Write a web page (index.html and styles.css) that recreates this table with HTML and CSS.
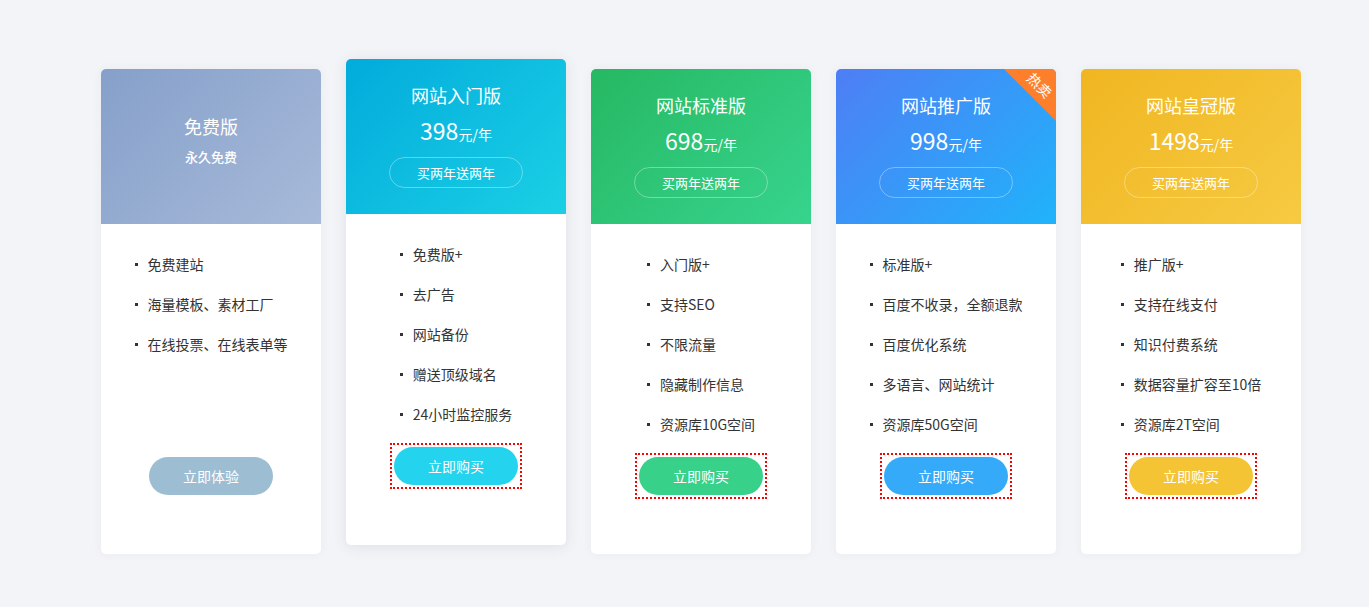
FILE: index.html
```html
<!DOCTYPE html>
<html lang="zh-CN">
<head>
<meta charset="utf-8">
<title>价格</title>
<link rel="stylesheet" href="styles.css">
</head>
<body>
<div class="plans">
  <div class="card card-free">
    <div class="head">
      <div class="title">免费版</div>
      <div class="sub">永久免费</div>
    </div>
    <div class="body">
      <div class="list-wrap">
        <ul class="feats">
          <li>免费建站</li>
          <li>海量模板、素材工厂</li>
          <li>在线投票、在线表单等</li>
        </ul>
      </div>
      <div class="btn-box plain-box"><a class="btn plain">立即体验</a></div>
    </div>
  </div>

  <div class="card card-entry featured">
    <div class="head">
      <div class="title">网站入门版</div>
      <div class="price">398<small>元/年</small></div>
      <div class="promo">买两年送两年</div>
    </div>
    <div class="body">
      <div class="list-wrap">
        <ul class="feats">
          <li>免费版+</li>
          <li>去广告</li>
          <li>网站备份</li>
          <li>赠送顶级域名</li>
          <li>24小时监控服务</li>
        </ul>
      </div>
      <div class="btn-box"><a class="btn">立即购买</a></div>
    </div>
  </div>

  <div class="card card-std">
    <div class="head">
      <div class="title">网站标准版</div>
      <div class="price">698<small>元/年</small></div>
      <div class="promo">买两年送两年</div>
    </div>
    <div class="body">
      <div class="list-wrap">
        <ul class="feats">
          <li>入门版+</li>
          <li>支持SEO</li>
          <li>不限流量</li>
          <li>隐藏制作信息</li>
          <li>资源库10G空间</li>
        </ul>
      </div>
      <div class="btn-box"><a class="btn">立即购买</a></div>
    </div>
  </div>

  <div class="card card-promo">
    <div class="head">
      <div class="hot"></div>
      <span class="hot-text">热卖</span>
      <div class="title">网站推广版</div>
      <div class="price">998<small>元/年</small></div>
      <div class="promo">买两年送两年</div>
    </div>
    <div class="body">
      <div class="list-wrap">
        <ul class="feats">
          <li>标准版+</li>
          <li>百度不收录，全额退款</li>
          <li>百度优化系统</li>
          <li>多语言、网站统计</li>
          <li>资源库50G空间</li>
        </ul>
      </div>
      <div class="btn-box"><a class="btn">立即购买</a></div>
    </div>
  </div>

  <div class="card card-crown">
    <div class="head">
      <div class="title">网站皇冠版</div>
      <div class="price">1498<small>元/年</small></div>
      <div class="promo">买两年送两年</div>
    </div>
    <div class="body">
      <div class="list-wrap">
        <ul class="feats">
          <li>推广版+</li>
          <li>支持在线支付</li>
          <li>知识付费系统</li>
          <li>数据容量扩容至10倍</li>
          <li>资源库2T空间</li>
        </ul>
      </div>
      <div class="btn-box"><a class="btn">立即购买</a></div>
    </div>
  </div>
</div>
</body>
</html>
```

FILE: styles.css
```css
* { box-sizing: border-box; }
html, body {
  margin: 0;
  padding: 0;
}
body {
  background: #f3f4f7;
  font-family: "Noto Sans CJK SC", "Noto Sans", sans-serif;
  color: #333;
  height: 607px;
  overflow: hidden;
}
.plans {
  display: flex;
  align-items: flex-start;
  gap: 25px;
  padding: 69px 0 0 101px;
}
.card {
  width: 220px;
  height: 485px;
  background: #fff;
  border-radius: 5px;
  overflow: hidden;
  box-shadow: 0 0 10px rgba(40, 60, 100, 0.05);
  display: flex;
  flex-direction: column;
}
.card.featured {
  margin-top: -10px;
  height: 486px;
  box-shadow: 0 2px 14px rgba(40, 60, 100, 0.1);
}
.head {
  position: relative;
  height: 155px;
  padding-top: 24px;
  display: flex;
  flex-direction: column;
  align-items: center;
  color: #fff;
}
.card-free .head {
  padding-top: 45px;
  background: linear-gradient(135deg, #86a0ca 0%, #a7bad9 100%);
}
.card-entry .head { background: linear-gradient(135deg, #02abdb 0%, #1bd0e5 100%); }
.card-std .head { background: linear-gradient(135deg, #26b862 0%, #37d48e 100%); }
.card-promo .head { background: linear-gradient(135deg, #4e7ef5 0%, #20b3fa 100%); }
.card-crown .head { background: linear-gradient(135deg, #f0b621 0%, #f6ca42 100%); }

.title {
  font-size: 18px;
  line-height: 24px;
}
.sub {
  margin-top: 10px;
  font-size: 13px;
  line-height: 18px;
  font-weight: 500;
}
.price {
  margin-top: 8px;
  font-size: 23px;
  line-height: 30px;
}
.price small {
  font-size: 14px;
}
.promo {
  margin-top: 8px;
  width: 134px;
  height: 31px;
  border: 1px solid rgba(255, 255, 255, 0.35);
  border-radius: 16px;
  font-size: 13px;
  line-height: 29px;
  text-align: center;
}
.hot {
  position: absolute;
  top: 0;
  right: 0;
  width: 52px;
  height: 52px;
  background: #fd7f2c;
  clip-path: polygon(0 0, 100% 0, 100% 100%);
}
.hot-text {
  position: absolute;
  right: 0;
  top: 7px;
  width: 30px;
  height: 18px;
  font-size: 14px;
  line-height: 18px;
  text-align: center;
  color: #fff;
  transform: translate(-1px, 0) rotate(45deg);
}
.body {
  display: flex;
  flex-direction: column;
  align-items: center;
  padding-top: 20px;
}
.list-wrap {
  height: 209px;
}
.feats {
  list-style: none;
  margin: 0;
  padding: 0;
}
.feats li {
  position: relative;
  padding-left: 13px;
  font-size: 14px;
  line-height: 40px;
  height: 40px;
  color: #333;
  white-space: nowrap;
}
.feats li::before {
  content: "";
  position: absolute;
  left: 0;
  top: 19px;
  width: 3px;
  height: 3px;
  background: #333;
}
.btn-box {
  padding: 2px;
  border: 2px dotted #ff0000;
}
.btn-box.plain-box {
  border-color: transparent;
}
.btn {
  display: block;
  width: 124px;
  height: 38px;
  border-radius: 19px;
  color: #fff;
  font-size: 14px;
  line-height: 38px;
  text-align: center;
}
.btn.plain {
  background: #9dbdd2;
}
.card-entry .btn { background: #24d3ed; }
.card-std .btn { background: #38d18a; }
.card-promo .btn { background: #35aaf9; }
.card-crown .btn { background: #f4c435; }
```
